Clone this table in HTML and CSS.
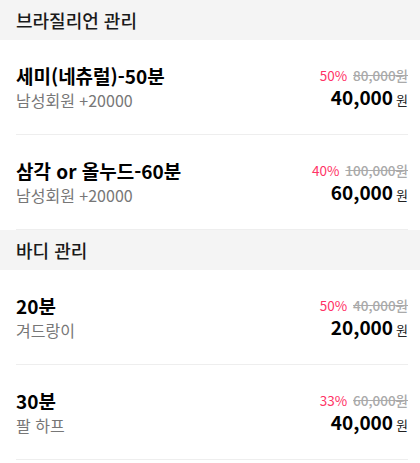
FILE: index.html
```html
<!DOCTYPE html>
<html lang="ko">
<head>
<meta charset="utf-8">
<link rel="stylesheet" href="styles.css">
</head>
<body>
<div class="menu">
  <div class="section-title">브라질리언 관리</div>
  <div class="item">
    <div class="info">
      <div class="name">세미(네츄럴)-50분</div>
      <div class="desc">남성회원 +20000</div>
    </div>
    <div class="price">
      <div class="orig"><span class="rate">50%</span><span class="strike">80,000원</span></div>
      <div class="final"><span class="num">40,000</span><span class="won">원</span></div>
    </div>
  </div>
  <div class="item">
    <div class="info">
      <div class="name">삼각 or 올누드-60분</div>
      <div class="desc">남성회원 +20000</div>
    </div>
    <div class="price">
      <div class="orig"><span class="rate">40%</span><span class="strike">100,000원</span></div>
      <div class="final"><span class="num">60,000</span><span class="won">원</span></div>
    </div>
  </div>
  <div class="section-title">바디 관리</div>
  <div class="item">
    <div class="info">
      <div class="name">20분</div>
      <div class="desc">겨드랑이</div>
    </div>
    <div class="price">
      <div class="orig"><span class="rate">50%</span><span class="strike">40,000원</span></div>
      <div class="final"><span class="num">20,000</span><span class="won">원</span></div>
    </div>
  </div>
  <div class="item">
    <div class="info">
      <div class="name">30분</div>
      <div class="desc">팔 하프</div>
    </div>
    <div class="price">
      <div class="orig"><span class="rate">33%</span><span class="strike">60,000원</span></div>
      <div class="final"><span class="num">40,000</span><span class="won">원</span></div>
    </div>
  </div>
</div>
</body>
</html>
```
FILE: styles.css
```css
html, body {
  margin: 0;
  padding: 0;
  background: #fff;
}
body {
  font-family: "Noto Sans CJK KR", "Noto Sans", sans-serif;
  color: #111;
}
.menu {
  display: flex;
  flex-direction: column;
}
.section-title {
  height: 40px;
  background: #f4f4f4;
  display: flex;
  align-items: center;
  padding-left: 16px;
  font-size: 18px;
  font-weight: 500;
  color: #1a1a1a;
}
.item {
  margin: 0 12px 0 16px;
  height: 94px;
  border-bottom: 1px solid #eeeeee;
  display: flex;
  justify-content: space-between;
  align-items: center;
}
.info {
  display: flex;
  flex-direction: column;
}
.name {
  font-size: 19px;
  font-weight: 700;
  line-height: 26px;
  color: #000;
}
.desc {
  font-size: 16px;
  color: #777;
  line-height: 22px;
}
.price {
  display: flex;
  flex-direction: column;
  align-items: flex-end;
  padding-top: 5px;
}
.orig {
  font-size: 13.5px;
  line-height: 18px;
}
.rate {
  color: #ff3366;
  margin-right: 6px;
}
.strike {
  color: #aaa;
  text-decoration: line-through;
  font-weight: 500;
}
.final {
  display: flex;
  align-items: baseline;
  line-height: 26px;
}
.num {
  font-size: 19px;
  font-weight: 700;
  color: #000;
}
.won {
  font-size: 13px;
  margin-left: 3px;
  color: #222;
}
```
